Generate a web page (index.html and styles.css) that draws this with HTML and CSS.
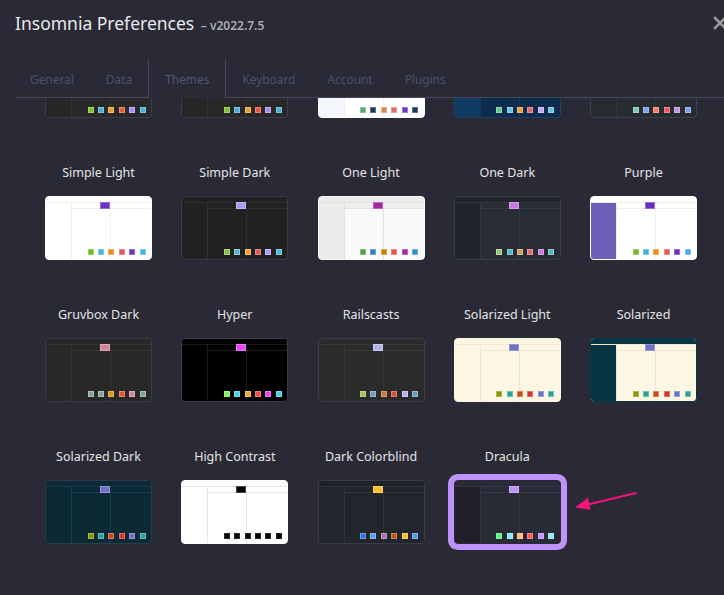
FILE: index.html
```html
<!DOCTYPE html>
<html lang="en">
<head>
<meta charset="utf-8">
<title>Insomnia Preferences</title>
<link rel="stylesheet" href="styles.css">
</head>
<body>
<div class="modal">
  <header class="modal-head">
    <h1 class="title">Insomnia Preferences <span class="version">– v2022.7.5</span></h1>
    <button class="close" aria-label="Close">
      <svg viewBox="0 0 14 14" width="14" height="14"><path d="M2 2 L12 12 M12 2 L2 12" stroke="#9b9b9b" stroke-width="2.6" stroke-linecap="square" fill="none"/></svg>
    </button>
  </header>
  <nav class="tabs">
    <span class="tab">General</span>
    <span class="tab">Data</span>
    <span class="tab active">Themes</span>
    <span class="tab">Keyboard</span>
    <span class="tab">Account</span>
    <span class="tab">Plugins</span>
  </nav>
  <section class="panel">
    <div class="theme-grid">
      <div class="theme"><div class="name"></div><div class="thumb t-default"><i class="tb"></i><i class="sb"></i><i class="hd"></i><i class="p1"></i><i class="ac"></i><span class="sw"><b></b><b></b><b></b><b></b><b></b><b></b></span></div></div>
      <div class="theme"><div class="name"></div><div class="thumb t-legacy"><i class="tb"></i><i class="sb"></i><i class="hd"></i><i class="p1"></i><i class="ac"></i><span class="sw"><b></b><b></b><b></b><b></b><b></b><b></b></span></div></div>
      <div class="theme"><div class="name"></div><div class="thumb t-studio-light"><i class="tb"></i><i class="sb"></i><i class="hd"></i><i class="p1"></i><i class="ac"></i><span class="sw"><b></b><b></b><b></b><b></b><b></b><b></b></span></div></div>
      <div class="theme"><div class="name"></div><div class="thumb t-studio-dark"><i class="tb"></i><i class="sb"></i><i class="hd"></i><i class="p1"></i><i class="ac"></i><span class="sw"><b></b><b></b><b></b><b></b><b></b><b></b></span></div></div>
      <div class="theme"><div class="name"></div><div class="thumb t-material"><i class="tb"></i><i class="sb"></i><i class="hd"></i><i class="p1"></i><i class="ac"></i><span class="sw"><b></b><b></b><b></b><b></b><b></b><b></b></span></div></div>

      <div class="theme"><div class="name">Simple Light</div><div class="thumb t-simple-light"><i class="tb"></i><i class="sb"></i><i class="hd"></i><i class="p1"></i><i class="ac"></i><span class="sw"><b></b><b></b><b></b><b></b><b></b><b></b></span></div></div>
      <div class="theme"><div class="name">Simple Dark</div><div class="thumb t-simple-dark"><i class="tb"></i><i class="sb"></i><i class="hd"></i><i class="p1"></i><i class="ac"></i><span class="sw"><b></b><b></b><b></b><b></b><b></b><b></b></span></div></div>
      <div class="theme"><div class="name">One Light</div><div class="thumb t-one-light"><i class="tb"></i><i class="sb"></i><i class="hd"></i><i class="p1"></i><i class="ac"></i><span class="sw"><b></b><b></b><b></b><b></b><b></b><b></b></span></div></div>
      <div class="theme"><div class="name">One Dark</div><div class="thumb t-one-dark"><i class="tb"></i><i class="sb"></i><i class="hd"></i><i class="p1"></i><i class="ac"></i><span class="sw"><b></b><b></b><b></b><b></b><b></b><b></b></span></div></div>
      <div class="theme"><div class="name">Purple</div><div class="thumb t-purple"><i class="tb"></i><i class="sb"></i><i class="hd"></i><i class="p1"></i><i class="ac"></i><span class="sw"><b></b><b></b><b></b><b></b><b></b><b></b></span></div></div>

      <div class="theme"><div class="name">Gruvbox Dark</div><div class="thumb t-gruvbox"><i class="tb"></i><i class="sb"></i><i class="hd"></i><i class="p1"></i><i class="ac"></i><span class="sw"><b></b><b></b><b></b><b></b><b></b><b></b></span></div></div>
      <div class="theme"><div class="name">Hyper</div><div class="thumb t-hyper"><i class="tb"></i><i class="sb"></i><i class="hd"></i><i class="p1"></i><i class="ac"></i><span class="sw"><b></b><b></b><b></b><b></b><b></b><b></b></span></div></div>
      <div class="theme"><div class="name">Railscasts</div><div class="thumb t-railscasts"><i class="tb"></i><i class="sb"></i><i class="hd"></i><i class="p1"></i><i class="ac"></i><span class="sw"><b></b><b></b><b></b><b></b><b></b><b></b></span></div></div>
      <div class="theme"><div class="name">Solarized Light</div><div class="thumb t-sol-light"><i class="tb"></i><i class="sb"></i><i class="hd"></i><i class="p1"></i><i class="ac"></i><span class="sw"><b></b><b></b><b></b><b></b><b></b><b></b></span></div></div>
      <div class="theme"><div class="name">Solarized</div><div class="thumb t-solarized"><i class="tb"></i><i class="sb"></i><i class="hd"></i><i class="p1"></i><i class="ac"></i><span class="sw"><b></b><b></b><b></b><b></b><b></b><b></b></span></div></div>

      <div class="theme"><div class="name">Solarized Dark</div><div class="thumb t-sol-dark"><i class="tb"></i><i class="sb"></i><i class="hd"></i><i class="p1"></i><i class="ac"></i><span class="sw"><b></b><b></b><b></b><b></b><b></b><b></b></span></div></div>
      <div class="theme"><div class="name">High Contrast</div><div class="thumb t-contrast"><i class="tb"></i><i class="sb"></i><i class="hd"></i><i class="p1"></i><i class="ac"></i><span class="sw"><b></b><b></b><b></b><b></b><b></b><b></b></span></div></div>
      <div class="theme"><div class="name">Dark Colorblind</div><div class="thumb t-colorblind"><i class="tb"></i><i class="sb"></i><i class="hd"></i><i class="p1"></i><i class="ac"></i><span class="sw"><b></b><b></b><b></b><b></b><b></b><b></b></span></div></div>
      <div class="theme"><div class="name">Dracula</div><div class="thumb t-dracula selected"><i class="tb"></i><i class="sb"></i><i class="hd"></i><i class="p1"></i><i class="ac"></i><span class="sw"><b></b><b></b><b></b><b></b><b></b><b></b></span></div></div>
    </div>
  </section>
  <svg class="arrow" viewBox="0 0 75 30" width="75" height="30">
    <line x1="66" y1="8" x2="18" y2="19.5" stroke="#f5127e" stroke-width="2.2" stroke-linecap="round"/>
    <polygon points="5,22.5 20.5,24.8 18,12.8" fill="#f5127e"/>
  </svg>
</div>
</body>
</html>
```
FILE: styles.css
```css
* { box-sizing: border-box; }
html, body { margin: 0; padding: 0; }
body {
  width: 724px;
  height: 595px;
  overflow: hidden;
  background: #2a2a36;
  font-family: "Noto Sans", "Open Sans", sans-serif;
  color: #e2e2e2;
}
.modal {
  position: relative;
  height: 595px;
  display: flex;
  flex-direction: column;
}
.modal-head {
  height: 59px;
  display: flex;
  align-items: flex-start;
  padding: 11px 0 0 15px;
  flex: none;
}
.title {
  margin: 0;
  font-size: 17.5px;
  line-height: 24px;
  font-weight: 400;
  color: #e9e9e9;
  white-space: nowrap;
}
.version {
  font-size: 12px;
  font-weight: 600;
  color: #adadad;
  margin-left: 2px;
}
.close {
  margin-left: auto;
  margin-right: -3px;
  margin-top: 5px;
  padding: 0;
  border: 0;
  background: none;
  width: 14px;
  height: 14px;
  display: block;
}
.close svg { display: block; }
.tabs {
  flex: none;
  display: flex;
  margin-left: 15px;
  height: 39px;
  border-bottom: 1px solid #46475c;
}
.tab {
  padding: 2px 16px 0;
  font-size: 11.9px;
  line-height: 37px;
  color: #4d506c;
  white-space: nowrap;
}
.tab:first-child { padding-left: 15px; }
.tab.active {
  border-left: 1px solid #46475c;
  border-right: 1px solid #46475c;
  height: 39px;
  margin-bottom: -1px;
  background: #2a2a36;
  color: #555874;
}
.panel {
  flex: 1;
  overflow: hidden;
}
.theme-grid {
  display: grid;
  grid-template-columns: repeat(5, 136.25px);
  row-gap: 45px;
  margin: -77px 0 0 30.4px;
}
.theme {
  display: flex;
  flex-direction: column;
  align-items: center;
}
.name {
  font-size: 12.5px;
  line-height: 20px;
  height: 20px;
  margin-bottom: 13px;
  color: #e4e4e4;
  white-space: nowrap;
}

/* thumbnail */
.thumb {
  --bg: #fff; --top: var(--bg); --side: var(--bg); --head: var(--bg);
  --line: #eee; --bd: var(--bg); --ac: #6a33c7;
  width: 107px;
  height: 64px;
  border: 1px solid var(--bd);
  border-radius: 4px;
  background: var(--bg);
  overflow: hidden;
  display: grid;
  grid-template-columns: 26px 39px 1fr;
  grid-template-rows: 6px 6px 1fr;
}
.thumb i { display: block; }
.thumb .tb {
  grid-column: 1 / -1; grid-row: 1;
  background: var(--top);
  border-bottom: 1px solid var(--line);
}
.thumb .sb {
  grid-column: 1; grid-row: 2 / -1;
  background: var(--side);
  border-right: 1px solid var(--line);
}
.thumb .hd {
  grid-column: 2 / -1; grid-row: 2;
  background: var(--head);
  border-bottom: 1px solid var(--line);
}
.thumb .p1 {
  grid-column: 2; grid-row: 3;
  border-right: 1px solid var(--line);
}
.thumb .ac {
  grid-column: 2; grid-row: 1 / 3;
  justify-self: end; align-self: end;
  width: 10px; height: 7px;
  margin-right: 1px;
  background: var(--ac);
  box-shadow: inset 0 0 0 1px rgba(255,255,255,.28);
}
.thumb .sw {
  grid-column: 1 / -1; grid-row: 3;
  align-self: end; justify-self: end;
  display: flex;
  gap: 4.4px;
  padding: 0 5.5px 4px 0;
}
.thumb .sw b {
  display: block;
  width: 6px; height: 6px;
  box-shadow: inset 0 0 0 1px rgba(255,255,255,.3);
}
.sw b:nth-child(1) { background: var(--c1); }
.sw b:nth-child(2) { background: var(--c2); }
.sw b:nth-child(3) { background: var(--c3); }
.sw b:nth-child(4) { background: var(--c4); }
.sw b:nth-child(5) { background: var(--c5); }
.sw b:nth-child(6) { background: var(--c6); }

.thumb.selected {
  box-shadow: 0 0 0 6px #bd93f9;
  border-radius: 4px;
}

/* themes */
.t-default { --bg: #292929; --side: #262626; --line: #333333; --bd: #3b3c4c; --ac: #a58ff3;
  --c1: #7dc12b; --c2: #49aed6; --c3: #ee9b36; --c4: #e9563c; --c5: #a58ff3; --c6: #49aed6; }
.t-legacy { --bg: #282828; --side: #262626; --line: #333333; --bd: #3b3c4c; --ac: #a58ff3;
  --c1: #7dc12b; --c2: #49aed6; --c3: #ee9b36; --c4: #e9563c; --c5: #a58ff3; --c6: #49aed6; }
.t-studio-light { --bg: #ffffff; --side: #f4f7fb; --line: #eef0f3; --bd: #ffffff; --ac: #6c3ac9;
  --c1: #59a872; --c2: #1b3658; --c3: #d88a4c; --c4: #e06e6c; --c5: #6c3ac9; --c6: #1b3658; }
.t-studio-dark { --bg: #0e2d4e; --side: #113a62; --line: #17395e; --bd: #22405f; --ac: #c8a8f6;
  --c1: #6bc78c; --c2: #6ac1e6; --c3: #e6a13a; --c4: #e0686a; --c5: #c8a8f6; --c6: #6ac1e6; }
.t-material { --bg: #272c31; --side: #262b30; --line: #30363c; --bd: #3b4050; --ac: #c18fe6;
  --c1: #7fc5b8; --c2: #7c9ff0; --c3: #ee7b66; --c4: #ed5469; --c5: #c18fe6; --c6: #7c9ff0; }

.t-simple-light { --bg: #ffffff; --line: #efefef; --bd: #ffffff; --ac: #6a33c7;
  --c1: #75ba24; --c2: #4bb2de; --c3: #ec8c1c; --c4: #e15b5a; --c5: #6a33c7; --c6: #4bb2de; }
.t-simple-dark { --bg: #212121; --line: #2f2f2f; --bd: #3a3b49; --ac: #a99cf4;
  --c1: #87c14a; --c2: #55b4d8; --c3: #f0a232; --c4: #e0585a; --c5: #a99cf4; --c6: #55b4d8; }
.t-one-light { --bg: #fafafa; --top: #ebebeb; --side: #ebebeb; --head: #efefef; --line: #e2e2e2; --bd: #fafafa; --ac: #a626a4;
  --c1: #50a14f; --c2: #2f7fc1; --c3: #c18401; --c4: #e45649; --c5: #a626a4; --c6: #3a8ac8; }
.t-one-dark { --bg: #282c34; --top: #21252b; --side: #21252b; --line: #343842; --bd: #3a3d4c; --ac: #c678dd;
  --c1: #98c379; --c2: #56b6c2; --c3: #d19a66; --c4: #e06c75; --c5: #c678dd; --c6: #56b6c2; }
.t-purple { --bg: #ffffff; --side: #6f5eb8; --line: #ededed; --bd: #ffffff; --ac: #6a2fc4;
  --c1: #75ba24; --c2: #47aee0; --c3: #ec8c1c; --c4: #e15b5a; --c5: #6a2fc4; --c6: #47aee0; }

.t-gruvbox { --bg: #282828; --line: #353535; --bd: #3b3c4b; --ac: #d3869b;
  --c1: #83a598; --c2: #83a598; --c3: #d79921; --c4: #e5533b; --c5: #d3869b; --c6: #83a598; }
.t-hyper { --bg: #000000; --line: #1b1b1b; --bd: #3a3b4a; --ac: #e845f5;
  --c1: #83ef5b; --c2: #44d2e3; --c3: #f5a632; --c4: #f24848; --c5: #e845f2; --c6: #44d2e3; }
.t-railscasts { --bg: #2b2b2b; --line: #383838; --bd: #3b3c4b; --ac: #b6b3eb;
  --c1: #a5c261; --c2: #6d9cbe; --c3: #cc7833; --c4: #da4939; --c5: #b6b3eb; --c6: #6d9cbe; }
.t-sol-light { --bg: #fdf6e3; --line: #eee8d5; --bd: #fdf6e3; --ac: #6c71c4;
  --c1: #859900; --c2: #2aa198; --c3: #cb4b16; --c4: #dc322f; --c5: #6c71c4; --c6: #2aa198; }
.t-solarized { --bg: #fdf6e3; --top: #073642; --side: #073642; --line: #eee8d5; --bd: #073642; --ac: #6c71c4;
  --c1: #859900; --c2: #2aa198; --c3: #cb4b16; --c4: #dc322f; --c5: #6c71c4; --c6: #2aa198; }

.t-sol-dark { --bg: #0b2a35; --line: #163d49; --bd: #2b3d4c; --ac: #6c71c4;
  --c1: #859900; --c2: #2aa198; --c3: #cb4b16; --c4: #dc322f; --c5: #6c71c4; --c6: #2aa198; }
.t-contrast { --bg: #ffffff; --line: #e6e6e6; --bd: #ffffff; --ac: #000000;
  --c1: #000; --c2: #000; --c3: #000; --c4: #000; --c5: #000; --c6: #000; }
.t-colorblind { --bg: #22252b; --top: #1e2126; --line: #30343b; --bd: #383b4a; --ac: #f6c02d;
  --c1: #2f74d8; --c2: #569cee; --c3: #9a7ba3; --c4: #c4561b; --c5: #f6c02d; --c6: #5497e8; }
.t-dracula { --bg: #282a36; --side: #1f2029; --line: #343746; --bd: #282a36; --ac: #bd93f9;
  --c1: #50fa7b; --c2: #8be9fd; --c3: #ffb86c; --c4: #ff5555; --c5: #bd93f9; --c6: #8be9fd; }

.t-contrast .sw b { box-shadow: inset 0 0 0 1px rgba(255,255,255,.15); }

/* annotation arrow overlay */
.arrow {
  position: absolute;
  left: 570px;
  top: 485px;
}
```
